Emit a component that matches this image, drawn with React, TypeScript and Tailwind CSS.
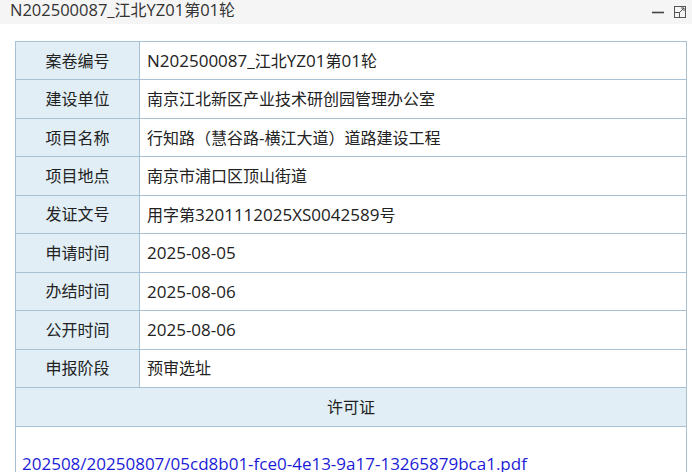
const rows: [string, string][] = [
  ["案卷编号", "N202500087_江北YZ01第01轮"],
  ["建设单位", "南京江北新区产业技术研创园管理办公室"],
  ["项目名称", "行知路（慧谷路-横江大道）道路建设工程"],
  ["项目地点", "南京市浦口区顶山街道"],
  ["发证文号", "用字第3201112025XS0042589号"],
  ["申请时间", "2025-08-05"],
  ["办结时间", "2025-08-06"],
  ["公开时间", "2025-08-06"],
  ["申报阶段", "预审选址"],
];

const CJK = /([\u3000-\u9fff\uff00-\uffef]+)/;

// latin runs render a bit larger than the CJK ones, like the original page font
function Mixed({ text, small }: { text: string; small?: boolean }) {
  const parts = text.split(CJK).filter(Boolean);
  return (
    <>
      {parts.map((p, i) =>
        /[\u3000-\u9fff\uff00-\uffef]/.test(p) ? (
          <span key={i} className="text-[16px]">{p}</span>
        ) : (
          <span key={i} className={small ? "text-[16.5px]" : "text-[17px]"}>{p}</span>
        )
      )}
    </>
  );
}

export default function App() {
  return (
    <div
      className="h-[472px] w-[692px] overflow-hidden bg-white text-[#222]"
      style={{ fontFamily: '"Open Sans", "Noto Sans CJK SC", sans-serif' }}
    >
      <div className="flex h-[24px] justify-between bg-[#f5f5f5] pl-[10px] pr-[6px]">
        <span className="text-[16px] leading-[20px] text-[#333]">
          <Mixed text="N202500087_江北YZ01第01轮" small />
        </span>
        <div className="flex items-center gap-[10px]">
          <svg width="12" height="12" viewBox="0 0 12 12">
            <path d="M0 6.5h12" stroke="#444" strokeWidth="1.6" />
          </svg>
          <svg width="12" height="12" viewBox="0 0 12 12" fill="none" stroke="#555" strokeWidth="1">
            <rect x="0.5" y="0.5" width="11" height="11" />
            <rect x="0.5" y="6.5" width="5" height="5" />
            <path d="M6 6L10 2M7 2h3v3" />
          </svg>
        </div>
      </div>
      <div className="pl-[15px] pr-[5px] pt-[17px]">
        <table className="w-full border-collapse text-[16px]">
          <tbody>
            {rows.map(([k, v]) => (
              <tr key={k} className="h-[38.44px]">
                <td className="w-[124px] border border-[#a9c1d5] bg-[#e1eef5] p-0 text-center align-middle">{k}</td>
                <td className="border border-[#a9c1d5] px-[7px] py-0 align-middle">
                  <Mixed text={v} />
                </td>
              </tr>
            ))}
            <tr className="h-[39px]">
              <td colSpan={2} className="border border-[#a9c1d5] bg-[#e1eef5] p-0 text-center align-middle">
                许可证
              </td>
            </tr>
            <tr>
              <td colSpan={2} className="border border-[#a9c1d5] px-[6px] pb-[6px] pt-[24px]">
                <a className="text-[17px] text-[#1c1cd8]">202508/20250807/05cd8b01-fce0-4e13-9a17-13265879bca1.pdf</a>
              </td>
            </tr>
          </tbody>
        </table>
      </div>
    </div>
  );
}
